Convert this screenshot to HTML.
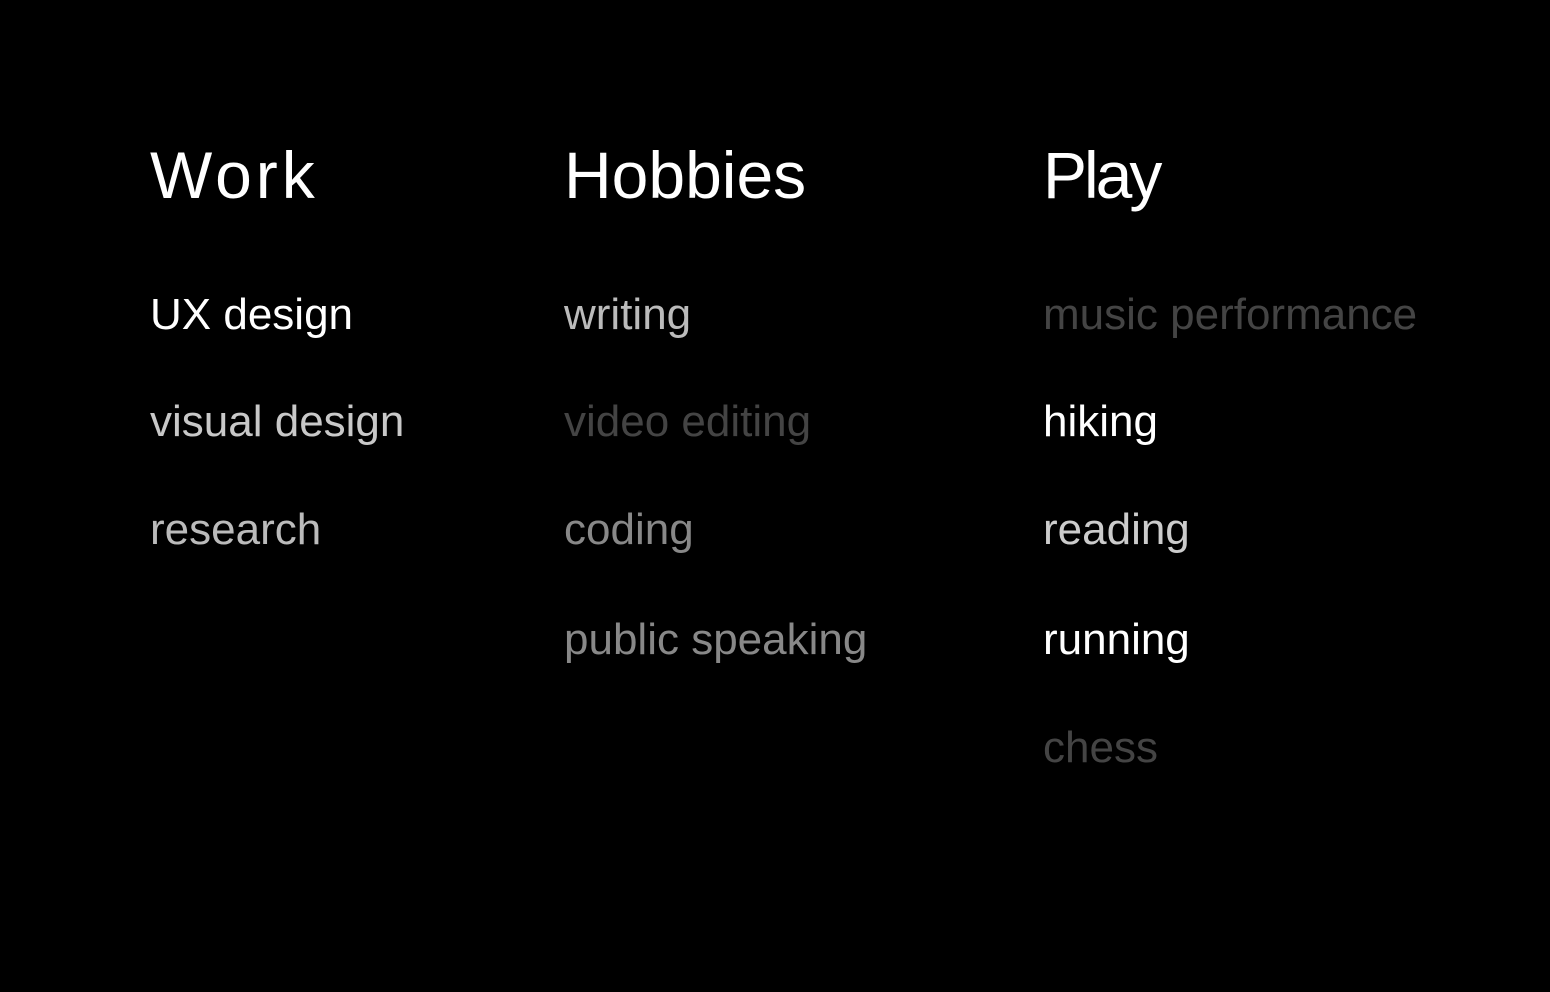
<!DOCTYPE html>
<html><head><meta charset="utf-8"><style>
html,body{margin:0;padding:0;background:#000;width:1550px;height:992px;overflow:hidden}
body{position:relative;font-family:"Liberation Sans",sans-serif}
.h{position:absolute;font-size:66px;line-height:66px;color:#fff;white-space:nowrap}
.i{position:absolute;font-size:44px;line-height:44px;white-space:nowrap}
</style></head><body>
<div class="h" style="left:150px;top:142px;letter-spacing:4px">Work</div>
<div class="h" style="left:564px;top:142px">Hobbies</div>
<div class="h" style="left:1043px;top:142px;letter-spacing:-3px">Play</div>

<div class="i" style="left:150px;top:293px;color:#fff">UX design</div>
<div class="i" style="left:150px;top:400px;color:#c8c8c8">visual design</div>
<div class="i" style="left:150px;top:508px;color:#bbb">research</div>

<div class="i" style="left:564px;top:293px;color:#bbb">writing</div>
<div class="i" style="left:564px;top:400px;color:#444">video editing</div>
<div class="i" style="left:564px;top:508px;color:#888">coding</div>
<div class="i" style="left:564px;top:618px;color:#888">public speaking</div>

<div class="i" style="left:1043px;top:293px;color:#444">music performance</div>
<div class="i" style="left:1043px;top:400px;color:#fff">hiking</div>
<div class="i" style="left:1043px;top:508px;color:#ccc">reading</div>
<div class="i" style="left:1043px;top:618px;color:#fff">running</div>
<div class="i" style="left:1043px;top:726px;color:#444">chess</div>
</body></html>
